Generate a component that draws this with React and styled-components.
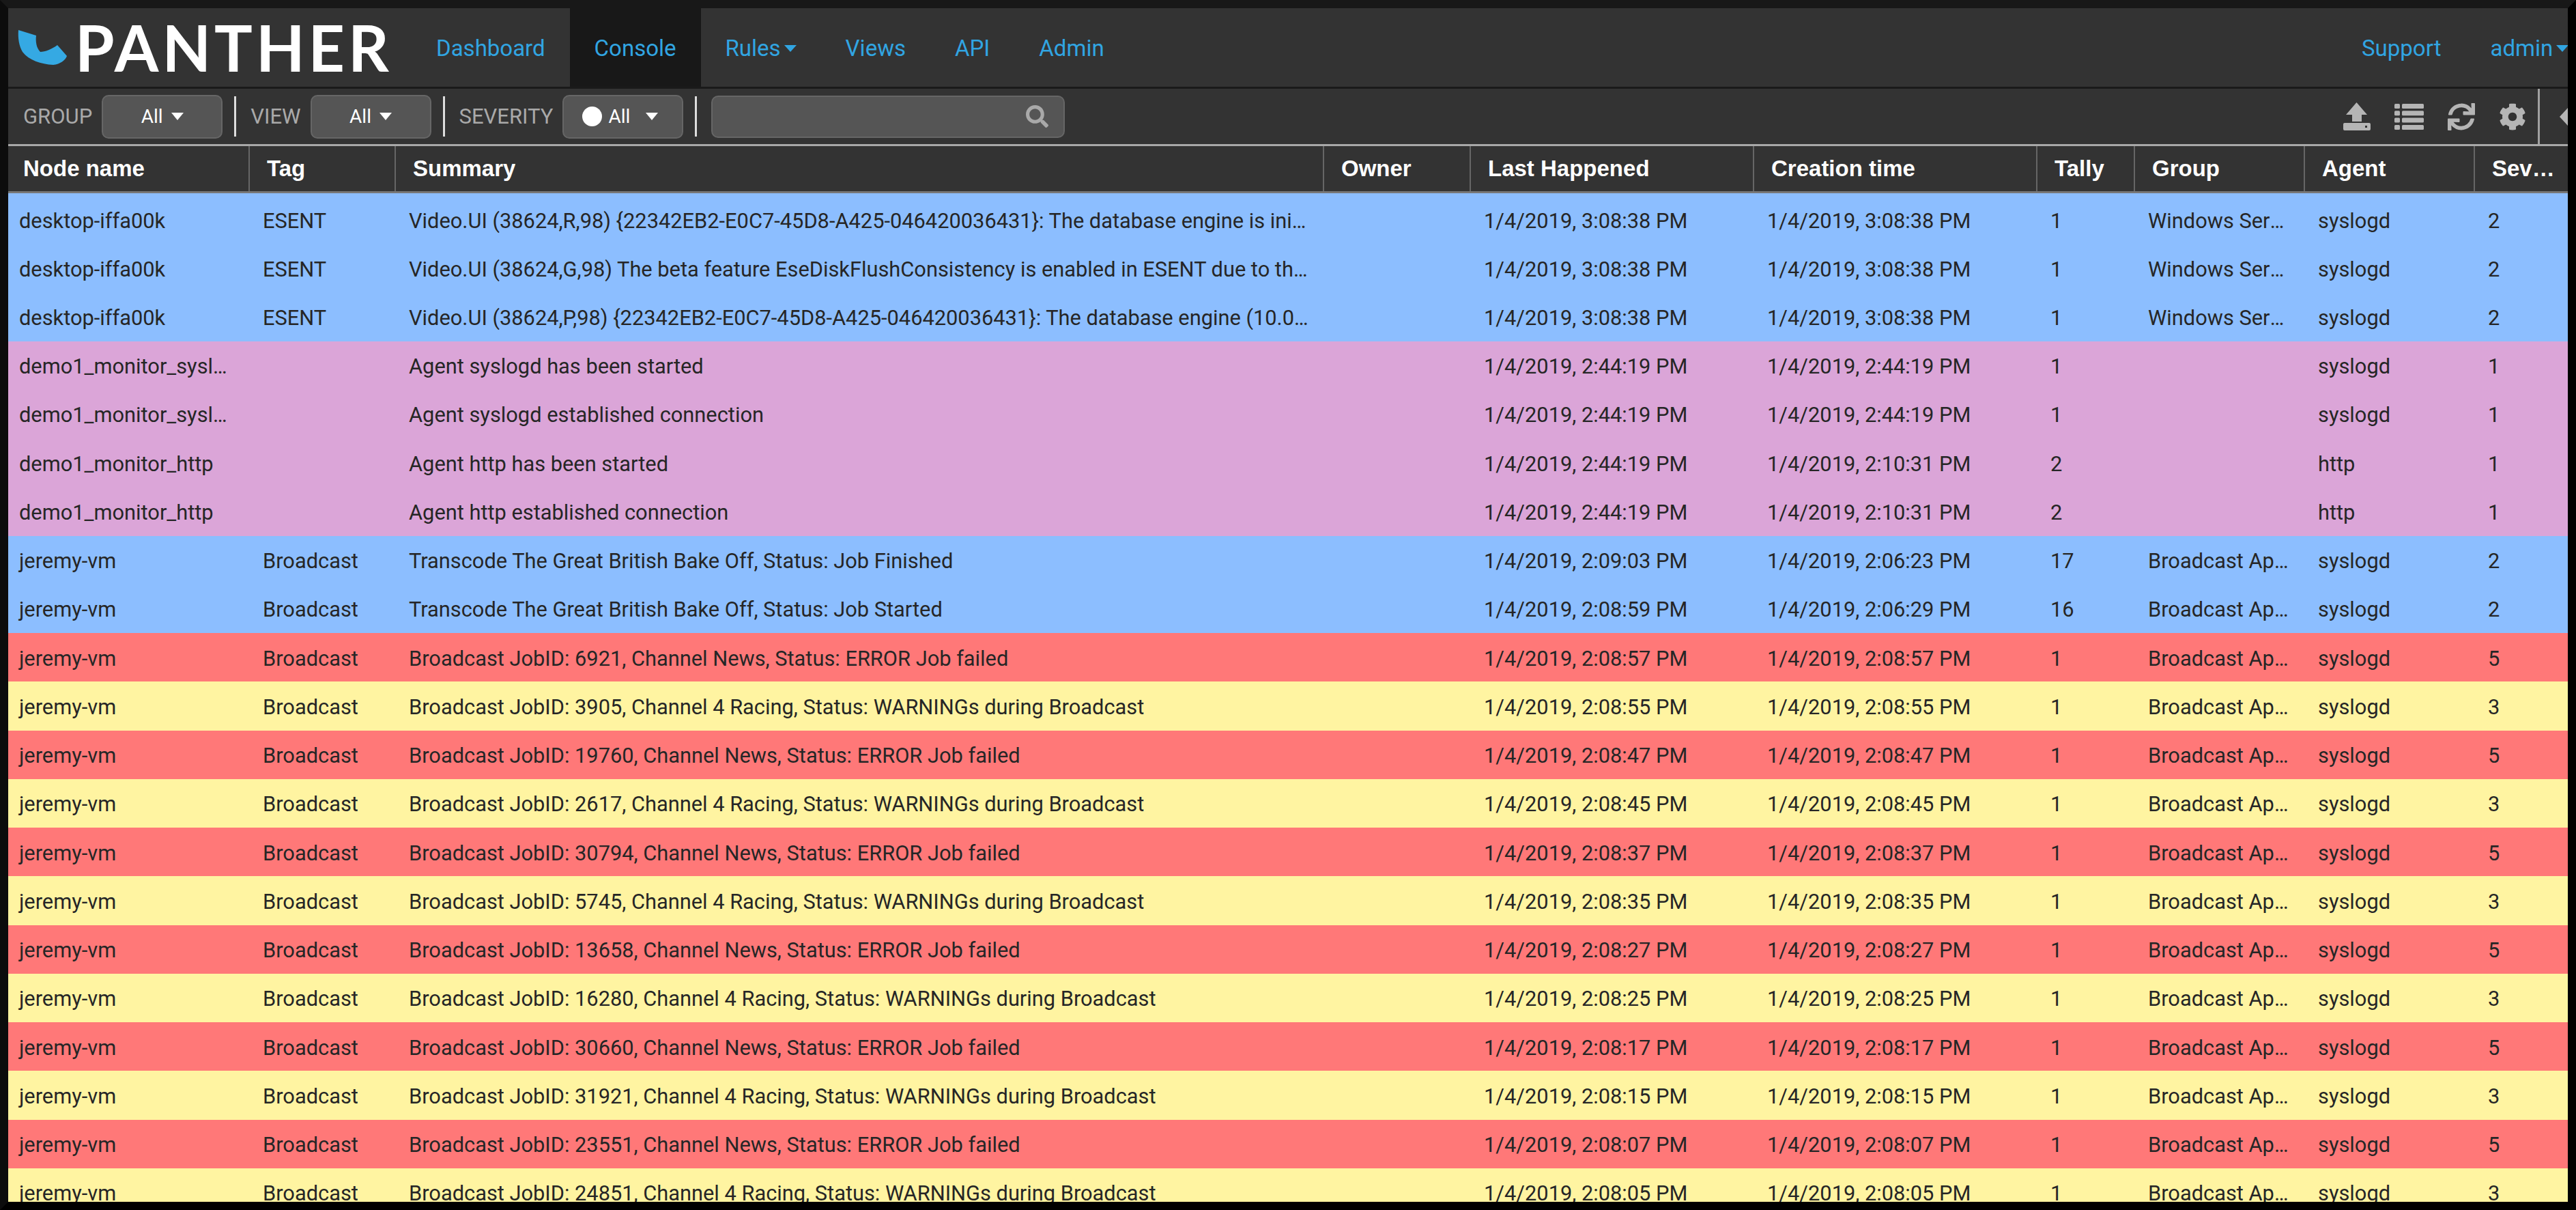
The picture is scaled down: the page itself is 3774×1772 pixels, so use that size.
import React from "react";
import styled, { createGlobalStyle } from "styled-components";
import { FaCog, FaSearch, FaSync } from "react-icons/fa";

const COLUMNS = "354px 214px 1360px 215px 415px 415px 143px 249px 249px 136px";

const severityColors = {
  1: "#dba5d8",
  2: "#8cbeff",
  3: "#fff4a1",
  5: "#ff7878",
};

const GlobalStyle = createGlobalStyle`
  html, body {
    margin: 0;
    padding: 0;
    background: #000;
  }
  * {
    box-sizing: border-box;
  }
`;

const Frame = styled.div`
  width: 3774px;
  height: 1772px;
  border-style: solid;
  border-width: 12px;
  border-color: #181818 #000 #000 #0c0c0c;
  overflow: hidden;
  background: #333;
  font-family: Roboto, "Liberation Sans", sans-serif;
`;

const NavBar = styled.nav`
  display: flex;
  height: 118px;
  background: #333;
  border-bottom: 3px solid #1a1a1a;
  overflow: hidden;
`;

const Brand = styled.div`
  display: flex;
  align-items: center;
  width: 591px;
  padding-left: 14px;
`;

const BrandName = styled.span`
  margin-left: 12px;
  font-family: Lato, "Open Sans", sans-serif;
  font-size: 93px;
  font-weight: 700;
  line-height: 1;
  letter-spacing: 5px;
  color: #fff;
`;

const NavLink = styled.a`
  display: flex;
  align-items: center;
  padding: 2px 36px 0;
  font-size: 33px;
  color: #31a5e2;
  white-space: nowrap;
  background: ${(props) => (props.$active ? "#181818" : "transparent")};
`;

const NavCaret = styled.span`
  width: 0;
  height: 0;
  margin-left: 5px;
  border-left: 9px solid transparent;
  border-right: 9px solid transparent;
  border-top: 10px solid #31a5e2;
`;

const NavRight = styled.div`
  display: flex;
  margin-left: auto;
  flex-shrink: 0;
  width: 338px;
`;

const Toolbar = styled.div`
  display: flex;
  align-items: center;
  height: 84px;
  padding-left: 22px;
  background: #333;
  border-bottom: 3px solid #a8a8a8;
`;

const FilterLabel = styled.span`
  margin-right: 14px;
  font-size: 31px;
  color: #a9a9a9;
`;

const FilterButton = styled.div`
  display: flex;
  align-items: center;
  justify-content: center;
  width: 177px;
  height: 64px;
  padding-right: ${(props) => props.$shift || 0}px;
  background: #555;
  border: 2px solid #666;
  border-radius: 10px;
  font-size: 28px;
  color: #fff;
`;

const FilterCaret = styled.span`
  width: 0;
  height: 0;
  margin-left: ${(props) => props.$gap}px;
  border-left: 9px solid transparent;
  border-right: 9px solid transparent;
  border-top: 11px solid #fff;
`;

const SeverityDot = styled.span`
  width: 29px;
  height: 29px;
  margin-right: 9px;
  border-radius: 50%;
  background: #fff;
`;

const Divider = styled.span`
  width: 3px;
  height: 59px;
  margin: 0 21px 0 17px;
  background: #ddd;
`;

const SearchBox = styled.div`
  display: flex;
  align-items: center;
  justify-content: flex-end;
  width: 518px;
  height: 62px;
  padding-right: 22px;
  background: #555;
  border: 2px solid #666;
  border-radius: 10px;
  color: #a9a9a9;
  font-size: 33px;
`;

const ToolIcons = styled.div`
  display: flex;
  align-items: center;
  gap: 35px;
  margin-left: auto;
  color: #b5b5b5;
  font-size: 40px;
  line-height: 0;
`;

const Collapse = styled.div`
  display: flex;
  align-items: center;
  align-self: stretch;
  width: 44px;
  margin-left: 17px;
  padding-left: 29px;
  border-left: 3px solid #a0a0a0;
  color: #b5b5b5;
`;

const HeaderRow = styled.div`
  display: grid;
  grid-template-columns: ${COLUMNS};
  height: 69px;
  background: #333;
  border-bottom: 3px solid #777;
`;

const HeaderCell = styled.div`
  display: flex;
  align-items: center;
  min-width: 0;
  padding-left: 25px;
  padding-right: 12px;
  border-right: 2px solid #666;
  font-family: "Liberation Sans", Arial, sans-serif;
  font-size: 33px;
  font-weight: 700;
  color: #fff;
  &:first-child {
    padding-left: 22px;
  }
  &:last-child {
    border-right: none;
  }
`;

const HeaderText = styled.span`
  white-space: nowrap;
  overflow: hidden;
  text-overflow: ellipsis;
`;

const Row = styled.div`
  display: grid;
  grid-template-columns: ${COLUMNS};
  align-items: center;
  height: 71.25px;
  background: ${(props) => severityColors[props.$severity]};
  &:first-child {
    height: 74px;
    padding-top: 3px;
  }
`;

const Cell = styled.div`
  padding: 3px 20px 0 19px;
  font-size: 30.8px;
  color: #262626;
  white-space: nowrap;
  overflow: hidden;
  text-overflow: ellipsis;
  &:first-child {
    padding-left: 16px;
  }
`;

const headers = [
  "Node name",
  "Tag",
  "Summary",
  "Owner",
  "Last Happened",
  "Creation time",
  "Tally",
  "Group",
  "Agent",
  "Severity",
];

const esent = "desktop-iffa00k";
const guid = "{22342EB2-E0C7-45D8-A425-046420036431}";
const winGroup = "Windows Server Events";
const bcGroup = "Broadcast Applications";

const rows = [
  [esent, "ESENT", `Video.UI (38624,R,98) ${guid}: The database engine is initiating recovery steps.`, "3:08:38 PM", "3:08:38 PM", 1, winGroup, "syslogd", 2],
  [esent, "ESENT", "Video.UI (38624,G,98) The beta feature EseDiskFlushConsistency is enabled in ESENT due to the beta site mode settings.", "3:08:38 PM", "3:08:38 PM", 1, winGroup, "syslogd", 2],
  [esent, "ESENT", `Video.UI (38624,P,98) ${guid}: The database engine (10.0.17134.0) is starting a new instance.`, "3:08:38 PM", "3:08:38 PM", 1, winGroup, "syslogd", 2],
  ["demo1_monitor_syslogd", "", "Agent syslogd has been started", "2:44:19 PM", "2:44:19 PM", 1, "", "syslogd", 1],
  ["demo1_monitor_syslogd", "", "Agent syslogd established connection", "2:44:19 PM", "2:44:19 PM", 1, "", "syslogd", 1],
  ["demo1_monitor_http", "", "Agent http has been started", "2:44:19 PM", "2:10:31 PM", 2, "", "http", 1],
  ["demo1_monitor_http", "", "Agent http established connection", "2:44:19 PM", "2:10:31 PM", 2, "", "http", 1],
  ["jeremy-vm", "Broadcast", "Transcode The Great British Bake Off, Status: Job Finished", "2:09:03 PM", "2:06:23 PM", 17, bcGroup, "syslogd", 2],
  ["jeremy-vm", "Broadcast", "Transcode The Great British Bake Off, Status: Job Started", "2:08:59 PM", "2:06:29 PM", 16, bcGroup, "syslogd", 2],
  ["jeremy-vm", "Broadcast", "Broadcast JobID: 6921, Channel News, Status: ERROR Job failed", "2:08:57 PM", "2:08:57 PM", 1, bcGroup, "syslogd", 5],
  ["jeremy-vm", "Broadcast", "Broadcast JobID: 3905, Channel 4 Racing, Status: WARNINGs during Broadcast", "2:08:55 PM", "2:08:55 PM", 1, bcGroup, "syslogd", 3],
  ["jeremy-vm", "Broadcast", "Broadcast JobID: 19760, Channel News, Status: ERROR Job failed", "2:08:47 PM", "2:08:47 PM", 1, bcGroup, "syslogd", 5],
  ["jeremy-vm", "Broadcast", "Broadcast JobID: 2617, Channel 4 Racing, Status: WARNINGs during Broadcast", "2:08:45 PM", "2:08:45 PM", 1, bcGroup, "syslogd", 3],
  ["jeremy-vm", "Broadcast", "Broadcast JobID: 30794, Channel News, Status: ERROR Job failed", "2:08:37 PM", "2:08:37 PM", 1, bcGroup, "syslogd", 5],
  ["jeremy-vm", "Broadcast", "Broadcast JobID: 5745, Channel 4 Racing, Status: WARNINGs during Broadcast", "2:08:35 PM", "2:08:35 PM", 1, bcGroup, "syslogd", 3],
  ["jeremy-vm", "Broadcast", "Broadcast JobID: 13658, Channel News, Status: ERROR Job failed", "2:08:27 PM", "2:08:27 PM", 1, bcGroup, "syslogd", 5],
  ["jeremy-vm", "Broadcast", "Broadcast JobID: 16280, Channel 4 Racing, Status: WARNINGs during Broadcast", "2:08:25 PM", "2:08:25 PM", 1, bcGroup, "syslogd", 3],
  ["jeremy-vm", "Broadcast", "Broadcast JobID: 30660, Channel News, Status: ERROR Job failed", "2:08:17 PM", "2:08:17 PM", 1, bcGroup, "syslogd", 5],
  ["jeremy-vm", "Broadcast", "Broadcast JobID: 31921, Channel 4 Racing, Status: WARNINGs during Broadcast", "2:08:15 PM", "2:08:15 PM", 1, bcGroup, "syslogd", 3],
  ["jeremy-vm", "Broadcast", "Broadcast JobID: 23551, Channel News, Status: ERROR Job failed", "2:08:07 PM", "2:08:07 PM", 1, bcGroup, "syslogd", 5],
  ["jeremy-vm", "Broadcast", "Broadcast JobID: 24851, Channel 4 Racing, Status: WARNINGs during Broadcast", "2:08:05 PM", "2:08:05 PM", 1, bcGroup, "syslogd", 3],
];

function LogoMark() {
  return (
    <svg width="72" height="52" viewBox="0 0 72 52">
      <path
        fill="#35a9e3"
        d="M1 0 L27 8 C26 16 27 26 33 32 C40 32 50 28 58 22 L72 38 C70 44 62 50 52 51 C34 50 16 44 7 32 C2 24 0 12 1 0 Z"
      />
    </svg>
  );
}

function UploadIcon() {
  return (
    <svg width="40" height="41" viewBox="0 0 40 41" fill="currentColor">
      <path d="M19.5 0 L35 18 H27 V28 H13 V18 H4 Z" />
      <path d="M2 30 H38 a2 2 0 0 1 2 2 V39 a2 2 0 0 1 -2 2 H2 a2 2 0 0 1 -2 -2 V32 a2 2 0 0 1 2 -2 Z M32 34 v3 h3 v-3 Z" fillRule="evenodd" />
    </svg>
  );
}

function ListIcon() {
  return (
    <svg width="43" height="38" viewBox="0 0 43 38" fill="currentColor">
      {[0, 10.3, 20.6, 30.9].map((y) => (
        <g key={y}>
          <rect x="0" y={y} width="8" height="7" rx="1.5" />
          <rect x="11" y={y} width="32" height="7" rx="1.5" />
        </g>
      ))}
    </svg>
  );
}

function CollapseArrow() {
  return (
    <svg width="12" height="26" viewBox="0 0 12 26" fill="currentColor">
      <path d="M0 13 L12 0 V26 Z" />
    </svg>
  );
}

export default function App() {
  return (
    <>
      <GlobalStyle />
      <Frame>
        <NavBar>
          <Brand>
            <LogoMark />
            <BrandName>PANTHER</BrandName>
          </Brand>
          <NavLink>Dashboard</NavLink>
          <NavLink $active>Console</NavLink>
          <NavLink>
            Rules
            <NavCaret />
          </NavLink>
          <NavLink>Views</NavLink>
          <NavLink>API</NavLink>
          <NavLink>Admin</NavLink>
          <NavRight>
            <NavLink>Support</NavLink>
            <NavLink>
              admin
              <NavCaret />
            </NavLink>
          </NavRight>
        </NavBar>
        <Toolbar>
          <FilterLabel>GROUP</FilterLabel>
          <FilterButton>
            All
            <FilterCaret $gap={12} />
          </FilterButton>
          <Divider />
          <FilterLabel>VIEW</FilterLabel>
          <FilterButton>
            All
            <FilterCaret $gap={12} />
          </FilterButton>
          <Divider />
          <FilterLabel>SEVERITY</FilterLabel>
          <FilterButton $shift={8}>
            <SeverityDot />
            All
            <FilterCaret $gap={23} />
          </FilterButton>
          <Divider />
          <SearchBox>
            <FaSearch />
          </SearchBox>
          <ToolIcons>
            <UploadIcon />
            <ListIcon />
            <FaSync />
            <FaCog />
          </ToolIcons>
          <Collapse>
            <CollapseArrow />
          </Collapse>
        </Toolbar>
        <HeaderRow>
          {headers.map((title) => (
            <HeaderCell key={title}>
              <HeaderText>{title}</HeaderText>
            </HeaderCell>
          ))}
        </HeaderRow>
        <div>
          {rows.map((row, index) => {
            const [node, tag, summary, last, created, tally, group, agent, severity] = row;
            return (
              <Row key={index} $severity={severity}>
                <Cell>{node}</Cell>
                <Cell>{tag}</Cell>
                <Cell>{summary}</Cell>
                <Cell />
                <Cell>{`1/4/2019, ${last}`}</Cell>
                <Cell>{`1/4/2019, ${created}`}</Cell>
                <Cell>{tally}</Cell>
                <Cell>{group}</Cell>
                <Cell>{agent}</Cell>
                <Cell>{severity}</Cell>
              </Row>
            );
          })}
        </div>
      </Frame>
    </>
  );
}
